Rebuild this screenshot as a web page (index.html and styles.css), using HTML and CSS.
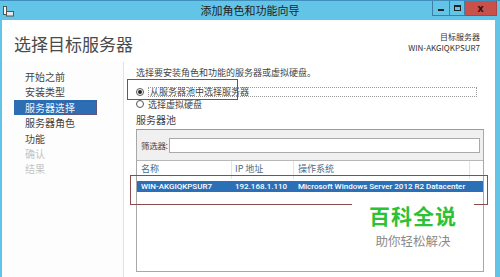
FILE: index.html
```html
<!DOCTYPE html>
<html lang="zh-CN">
<head>
  <meta charset="UTF-8">
  <title>添加角色和功能向导</title>
  <link rel="stylesheet" href="styles.css">
</head>
<body>
  <div class="window">
    <!-- 标题栏 -->
    <div class="titlebar">
      <svg class="app-icon" width="11" height="11" viewBox="0 0 11 11">
        <rect x="0.5" y="0.5" width="3" height="8" fill="#f4f4f4" stroke="#555"/>
        <rect x="3.5" y="5.5" width="7" height="4.5" fill="#e8e8e8" stroke="#555"/>
      </svg>
      <div class="title">添加角色和功能向导</div>
      <div class="controls">
        <span class="ctl min"><i></i></span>
        <span class="ctl max"><i></i></span>
        <span class="ctl close">x</span>
      </div>
    </div>

    <div class="frame">
      <!-- 页头 -->
      <div class="header">
        <h1>选择目标服务器</h1>
        <div class="target">
          <div>目标服务器</div>
          <div>WIN-AKGIQKPSUR7</div>
        </div>
      </div>

      <div class="body">
        <!-- 左侧步骤 -->
        <ul class="nav">
          <li>开始之前</li>
          <li>安装类型</li>
          <li class="active">服务器选择</li>
          <li>服务器角色</li>
          <li>功能</li>
          <li class="disabled">确认</li>
          <li class="disabled">结果</li>
        </ul>

        <!-- 右侧内容 -->
        <div class="content">
          <p class="desc">选择要安装角色和功能的服务器或虚拟硬盘。</p>
          <div class="radio-row">
            <span class="radio checked"></span>
            <span class="focus">从服务器池中选择服务器</span>
          </div>
          <div class="radio-row">
            <span class="radio"></span>
            <span>选择虚拟硬盘</span>
          </div>

          <div class="pool-title">服务器池</div>
          <div class="pool">
            <div class="filter">
              <span>筛选器:</span>
              <div class="filter-input"></div>
            </div>
            <div class="grid-head">
              <span class="c1">名称</span>
              <span class="c2">IP 地址</span>
              <span class="c3">操作系统</span>
              <span class="c4"></span>
            </div>
            <div class="grid-row selected">
              <span class="c1">WIN-AKGIQKPSUR7</span>
              <span class="c2">192.168.1.110</span>
              <span class="c3">Microsoft Windows Server 2012 R2 Datacenter</span>
            </div>
          </div>
        </div>
      </div>
    </div>

    <!-- 标注与水印 -->
    <div class="mark mark-radio"></div>
    <div class="mark mark-row"></div>
    <div class="mark mark-nav"></div>
    <div class="watermark">
      <div class="wm-big">百科全说</div>
      <div class="wm-small">助你轻松解决</div>
    </div>
  </div>
</body>
</html>
```

FILE: styles.css
```css
/* 全局 */
* {
  margin: 0;
  padding: 0;
  box-sizing: border-box;
}

body {
  width: 500px;
  height: 277px;
  overflow: hidden;
  font-family: "Noto Sans", "Noto Sans CJK SC", sans-serif;
  color: #333;
  background: #fff;
}

.window {
  position: relative;
  width: 500px;
  height: 277px;
  display: flex;
  flex-direction: column;
}

/* 标题栏 */
.titlebar {
  height: 20px;
  background: #62c4e6;
  border-top: 1px solid #3e8fbd;
  display: flex;
  align-items: center;
  position: relative;
}

.app-icon {
  margin-left: 3px;
  margin-top: 2px;
}

.title {
  position: absolute;
  left: 0;
  right: 0;
  text-align: center;
  font-size: 11px;
  color: #222;
  font-family: "Noto Sans CJK SC", sans-serif;
  line-height: 19px;
}

.controls {
  position: absolute;
  top: 0;
  right: 3px;
  display: flex;
  height: 15px;
}

.ctl {
  display: flex;
  align-items: center;
  justify-content: center;
  height: 15px;
  border: 1px solid #3d7fa8;
  border-top: none;
}

.ctl.min {
  width: 18px;
}

.ctl.min i {
  width: 6px;
  height: 2px;
  margin-top: 4px;
  background: #222;
}

.ctl.max {
  width: 15px;
  border-left: none;
}

.ctl.max i {
  width: 7px;
  height: 6px;
  border: 1px solid #222;
  border-top-width: 2px;
}

.ctl.close {
  width: 32px;
  background: #c9504b;
  border-color: #a94440;
  border-left: none;
  color: #3a1010;
  font-size: 10px;
  font-weight: bold;
  font-family: "DejaVu Sans", sans-serif;
}

/* 主体框架 */
.frame {
  flex: 1;
  display: flex;
  flex-direction: column;
  border-left: 2px solid #62c4e6;
  border-right: 5px solid #62c4e6;
  background: #fff;
  min-height: 0;
}

.header {
  height: 42px;
  display: flex;
  justify-content: space-between;
  padding: 13px 15px 0 12px;
}

.header h1 {
  font-family: "Noto Sans CJK SC", sans-serif;
  font-weight: normal;
  font-size: 17px;
  line-height: 22px;
  color: #4a4a4a;
}

.target {
  font-family: "Noto Sans CJK SC", "Noto Sans", sans-serif;
  font-size: 8px;
  line-height: 11px;
  text-align: right;
  color: #333;
  margin-top: -2px;
}

.body {
  flex: 1;
  display: flex;
  min-height: 0;
}

/* 左侧步骤 */
.nav {
  width: 121px;
  list-style: none;
  padding-top: 7px;
  background: #fdfdfd;
}

.nav li {
  height: 15.4px;
  line-height: 15.4px;
  margin-left: 12px;
  width: 83px;
  padding-left: 11px;
  font-family: "Noto Sans CJK SC", sans-serif;
  font-size: 10px;
  color: #444;
}

.nav li.active {
  background: #2d6db4;
  color: #eef3fa;
}

.nav li.disabled {
  color: #c4c4c4;
}

/* 右侧内容 */
.content {
  flex: 1;
  border-left: 1px solid #e2e2e2;
  padding: 5px 12px 0 12px;
  font-family: "Noto Sans CJK SC", sans-serif;
  font-size: 9px;
  color: #444;
  display: flex;
  flex-direction: column;
}

.desc {
  line-height: 12px;
  margin-bottom: 7px;
}

.radio-row {
  display: flex;
  align-items: center;
  height: 12px;
}

.radio {
  width: 8px;
  height: 8px;
  border: 1px solid #555;
  border-radius: 50%;
  margin-right: 4px;
  display: flex;
  align-items: center;
  justify-content: center;
  background: #fff;
}

.radio.checked::after {
  content: "";
  width: 4px;
  height: 4px;
  border-radius: 50%;
  background: #222;
}

.focus {
  flex: 1;
  margin-right: 6px;
  border: 1px dotted #999;
  line-height: 8px;
  padding-left: 1px;
}

.pool-title {
  font-size: 10px;
  line-height: 14px;
  margin-top: 3px;
  margin-bottom: 2px;
}

.pool {
  flex: 1;
  margin-right: -1px;
  border: 1px solid #a8a8a8;
  border-top-color: #9a9a9a;
  background: #fff;
  margin-bottom: 5px;
}

.filter {
  height: 31px;
  background: #f0f0f0;
  display: flex;
  align-items: center;
  padding: 0 3px 0 4px;
  border-bottom: 1px solid #b8b8b8;
}

.filter span {
  width: 28px;
  flex-shrink: 0;
  white-space: nowrap;
  font-size: 8.5px;
  letter-spacing: -0.3px;
}

.filter-input {
  flex: 1;
  height: 15px;
  background: #fff;
  border: 1px solid #aaa;
}

.grid-head,
.grid-row {
  display: flex;
  align-items: center;
}

.grid-head {
  height: 18px;
  color: #4a6d88;
  font-size: 9px;
}

.grid-head span {
  height: 18px;
  line-height: 16px;
  border-right: 1px solid #e4e4e4;
}

.c1 {
  width: 95px;
  padding-left: 4px;
}

.c2 {
  width: 62px;
  padding-left: 3px;
}

.c3 {
  width: 176px;
  padding-left: 4px;
}

.grid-head .c4 {
  flex: 1;
  border-right: none;
}

.grid-row {
  height: 11px;
  margin-top: 2px;
}

.grid-row span {
  border: none;
  white-space: nowrap;
}

.grid-row.selected {
  background: #2b6fb6;
  color: #fff;
  font-family: Roboto, "Noto Sans", sans-serif;
  font-weight: 500;
  font-size: 8px;
  line-height: 11px;
}

/* 标注框 */
.mark {
  position: absolute;
  border: 1px solid #8c4a4a;
}

.mark-radio {
  left: 127px;
  top: 79px;
  width: 111px;
  height: 21px;
}

.mark-row {
  left: 130px;
  top: 175px;
  width: 358px;
  height: 30px;
}

.mark-nav {
  left: 64px;
  top: 101px;
  width: 33px;
  height: 14px;
  border-color: #7a4a60;
  opacity: 0.6;
}

/* 水印 */
.watermark {
  position: absolute;
  left: 352px;
  top: 198px;
  width: 122px;
  height: 54px;
  background: #fff;
  display: flex;
  flex-direction: column;
  align-items: center;
  padding-top: 7px;
  font-family: "Noto Sans CJK SC", sans-serif;
}

.wm-big {
  font-size: 21px;
  line-height: 21px;
  font-weight: bold;
  color: #2cc234;
  letter-spacing: 1px;
}

.wm-small {
  font-size: 12.5px;
  line-height: 14px;
  margin-top: 8px;
  color: #8a8a8a;
}
```
